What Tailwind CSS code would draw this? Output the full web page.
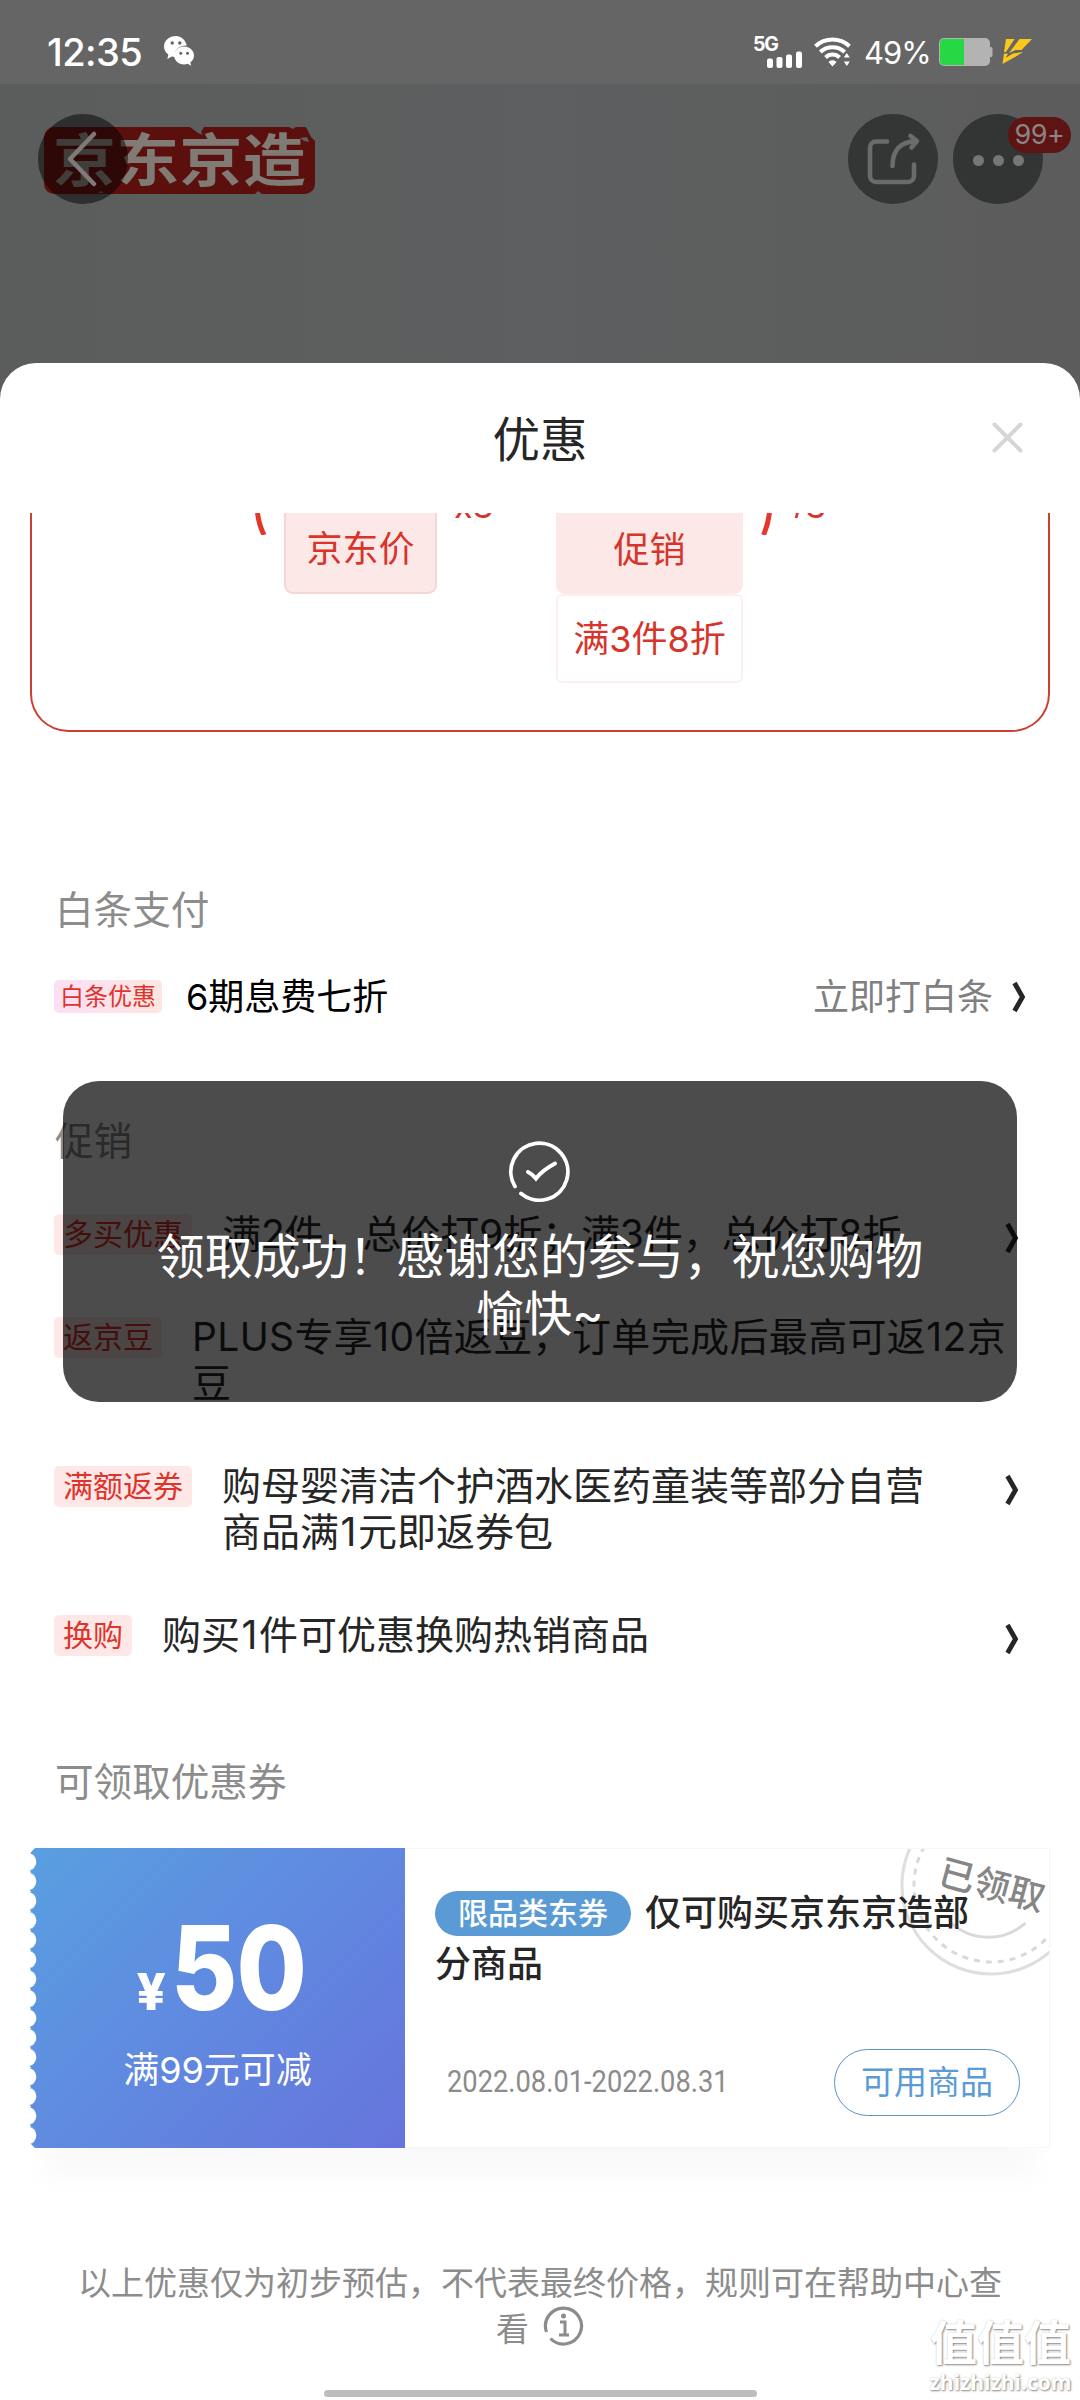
<!DOCTYPE html>
<html lang="zh-CN">
<head>
<meta charset="utf-8">
<title>优惠</title>
<script src="https://cdn.jsdelivr.net/npm/@tailwindcss/browser@4"></script>
</head>
<body class="bg-[#5c5e5e]">
<div class="relative w-[1080px] h-[2400px] overflow-hidden bg-linear-to-r from-[#5b5d5c] via-[#5e5f60] to-[#5b5c5b] font-['Inter','Noto_Sans_CJK_SC',sans-serif] flex flex-col">

  <!-- status bar -->
  <div class="h-[84px] shrink-0 bg-[#656565] flex items-center pl-[47px] pr-[47px] pt-[20px]">
    <span class="w-[97px] whitespace-nowrap text-white font-medium text-[38px] leading-none tracking-[-0.6px]">12:35</span>
    <svg class="ml-[19px] w-[32px] h-[32px] -mt-[3px]" viewBox="0 0 32 32">
      <path fill="#fff" d="M13 1C6.400 1 1 5.500 1 11.500c0 3.300 1.700 6.200 4.400 8.100L4.300 24l4.500-2.400c1 .3 2.200.5 3.400.5C10.500 16 15 10.400 23.800 10.400 22.600 5 18 1 13 1z"/>
      <path fill="#fff" d="M31 20.400c0-5-4.500-9-9.900-9s-9.900 4-9.900 9 4.400 9 9.900 9c1.200 0 2.400-.2 3.500-.6l3.600 2-.9-3.400c2.300-1.700 3.700-4.200 3.700-7z"/>
      <g fill="#656565"><circle cx="9.200" cy="8" r="1.700"/><circle cx="16.800" cy="8" r="1.700"/><circle cx="17.800" cy="18.300" r="1.500"/><circle cx="24.500" cy="18.300" r="1.500"/></g>
    </svg>
    <div class="grow"></div>
    <svg class="w-[50px] h-[34px] -mt-[3px] -ml-[3px] overflow-visible" viewBox="0 -2 50 34">
      <text x="-3" y="15" font-family="Inter" font-weight="700" font-size="19.500" letter-spacing="-1.200" fill="#fff">5G</text>
      <g fill="#fff"><rect x="11" y="22.500" width="6" height="9.500" rx="2"/><rect x="20.500" y="21" width="6" height="11" rx="2"/><rect x="30" y="18.500" width="6" height="13.500" rx="2"/><rect x="40" y="15.500" width="6" height="16.500" rx="2"/></g>
    </svg>
    <svg class="ml-[8px] w-[38px] h-[30px] -mt-[1px]" viewBox="0 0 38 30">
      <g fill="none" stroke="#fff" stroke-width="4"><path d="M1.500 9.200C11 .2 26 .2 35.500 9.200"/><path d="M6.300 15C13 8.600 24 8.600 30.700 15"/><path d="M11.500 20.500c4-3.900 10-3.900 14 0"/></g>
      <path fill="#fff" d="M14.500 25c2.300-2.200 5.700-2.200 8 0l-4 4.500zM29.800 20.500l3-4.500 3 4.500zM29.800 24.500l3 4.500 3-4.500z"/>
    </svg>
    <span class="ml-[12px] w-[70px] whitespace-nowrap text-white text-[31px] leading-none tracking-[-1px]">49%</span>
    <svg class="ml-[4px] w-[56px] h-[28px]" viewBox="0 0 56 28">
      <rect x="1" y="0" width="51" height="28" rx="5" fill="#b3b3b3"/><rect x="51" y="9" width="3.500" height="10" rx="1.500" fill="#b3b3b3"/>
      <path d="M26 1H6a4 4 0 0 0-4 4v18a4 4 0 0 0 4 4h20z" fill="#27d845"/>
    </svg>
    <svg class="ml-[7px] w-[32px] h-[27px] -mt-[2px]" viewBox="0 0 32 27"><path fill="#f8c91c" d="M5 1h8.500L5 14H3zM18.500 1H31L20.500 12h-6L8 15zM3 15.500l4 .3-2.200 4L12 15.500 22 14l-8 5L1.500 26z"/></svg>
  </div>

  <!-- product page header, dimmed -->
  <div class="h-[279px] shrink-0 flex items-start pt-[30px] pl-[38px]">
    <div class="relative w-[280px] h-[90px] flex items-center">
      <div class="ml-[6px] w-[271px] h-[67px] mt-[2px] rounded-[10px] bg-[#5b100d] flex items-center justify-center">
        <span class="text-[#807b74] font-bold text-[63px] leading-none tracking-[0.3px] whitespace-nowrap scale-y-90">京东京造</span>
      </div>
      <svg class="absolute left-0 top-0 w-[280px] h-[90px]" viewBox="0 0 280 90">
        <path fill="#5d5f5e" d="M152 13l8 6 5 2-2-3 3-5zM268 13l5 10 5 5V13zM60 79l3-2 3 2zM217 80l3-3 4 3zM262 24l7-1 2 5-5-1zM249 12l6 3 4-3z"/>
        <circle cx="45" cy="45" r="45" fill="#000" fill-opacity=".5"/>
        <path d="M56 20 32 45l24 25" fill="none" stroke="#7f7978" stroke-width="4.500" stroke-linecap="round" stroke-linejoin="round"/>
      </svg>
    </div>
    <div class="ml-[530px] size-[90px] rounded-full bg-[#343636]">
      <svg class="size-[90px]" viewBox="0 0 90 90" fill="none" stroke="#6b6b6b" stroke-width="4.600" stroke-linecap="round" stroke-linejoin="round">
        <path d="M39 27.500H28a6 6 0 0 0-6 6V62a6 6 0 0 0 6 6h32a6 6 0 0 0 6-6V50.500"/><path d="M44.500 52c0-15 7-24 23-25M62.500 22l6.500 5-5.500 6.500"/>
      </svg>
    </div>
    <div class="relative ml-[15px] size-[90px] rounded-full bg-[#333434] flex items-center justify-center gap-[9px]">
      <i class="size-[11px] rounded-full bg-[#767676] mt-[3px]"></i><i class="size-[11px] rounded-full bg-[#767676] mt-[3px]"></i><i class="size-[11px] rounded-full bg-[#767676] mt-[3px]"></i>
      <div class="absolute left-[55px] top-[3px] w-[63px] h-[36px] rounded-full bg-[#5f1414] text-[#8b8585] text-[27px] leading-[36px] text-center tracking-[-0.5px]">99+</div>
    </div>
  </div>

  <!-- promotion sheet -->
  <div class="grow bg-white rounded-t-[36px] flex flex-col">
    <div class="h-[150px] shrink-0 relative flex items-center justify-center">
      <h1 class="text-[47.500px] leading-none text-[#262626] mt-[3px]">优惠</h1>
      <svg class="absolute right-[57px] top-[59px] w-[31px] h-[31px]" viewBox="0 0 31 31"><path d="M2.500 2.500l26 26M28.500 2.500l-26 26" stroke="#d6d6d6" stroke-width="4" stroke-linecap="round"/></svg>
    </div>

    <!-- price formula card, scrolled partly under the header -->
    <div class="h-[219px] mx-[30px] shrink-0 border-2 border-t-0 border-[#cb4033] rounded-b-[38px] overflow-hidden flex items-start text-[#d5352b]">
      <div class="w-[252px] h-[22px] flex justify-end items-end overflow-hidden pr-[17px]"><svg class="w-[12px] h-[22px]" viewBox="0 0 12 22"><path d="M2.500 0Q4 12 9 22" fill="none" stroke="#e4362a" stroke-width="5"/></svg></div>
      <div class="w-[153px] h-[81px] border-2 border-t-0 border-[#f3d7d7] rounded-b-[9px] bg-[#fde8e8] flex items-center justify-center text-[36px] leading-none pb-[7px]">京东价</div>
      <div class="w-[119px] h-[5px] overflow-hidden flex items-end pl-[17px]"><span class="text-[34px] leading-[26px] -mb-[1px]">x3</span></div>
      <div class="w-[187px]">
        <div class="h-[81px] rounded-b-[9px] bg-[#fde8e8] flex items-center justify-center text-[36px] leading-none pb-[7px]">促销</div>
        <div class="h-[89px] border-2 border-[#fbf0f0] rounded-[6px] flex items-center justify-center text-[36px] leading-none whitespace-nowrap">满3件8折</div>
      </div>
      <svg class="ml-[17px] w-[14px] h-[22px]" viewBox="0 0 14 22"><path d="M9.500 0Q8 12 3.500 22" fill="none" stroke="#e4362a" stroke-width="5"/></svg>
      <div class="ml-[19px] h-[5px] overflow-hidden flex items-end"><span class="text-[34px] leading-[26px] -mb-[1px]">/3</span></div>
    </div>

    <!-- instalment payment -->
    <h2 class="mt-[148px] ml-[55px] h-[60px] text-[38.600px] leading-[60px] text-[#8c8c8c]">白条支付</h2>
    <div class="mt-[39px] h-[35px] pl-[54px] pr-[54px] flex items-center">
      <span class="w-[108px] h-[33px] rounded-[5px] bg-linear-to-r from-[#fbdff5] to-[#fde6e1] text-[#e0332b] text-[24px] leading-[33px] text-center whitespace-nowrap">白条优惠</span>
      <span class="ml-[24px] text-[36px] leading-none text-black whitespace-nowrap">6期息费七折</span>
      <span class="ml-auto text-[36px] leading-none text-[#808080] whitespace-nowrap">立即打白条</span>
      <svg class="ml-[19px] w-[14px] h-[32px]" viewBox="0 0 14 32"><path d="M2.500 2 10.500 16 2.500 30" fill="none" stroke="#262626" stroke-width="4.800"/></svg>
    </div>

    <!-- promotions -->
    <h2 class="mt-[97px] ml-[55px] h-[60px] text-[38.600px] leading-[60px] text-[#8c8c8c]">促销</h2>
    <div class="mt-[40px] pl-[54px] pr-[61px] flex flex-col gap-[57px] text-[39px] leading-[46px] text-[#262626]">
      <div class="h-[46px] flex items-start">
        <span class="mt-[3px] w-[138px] h-[41px] rounded-[5px] bg-[#fde8e7] text-[#e0332b] text-[30px] leading-[41px] text-center shrink-0">多买优惠</span>
        <p class="ml-[30px] whitespace-nowrap tracking-[-0.1px]">满2件，总价打9折；满3件，总价打8折</p>
        <svg class="ml-auto mt-[11px] w-[14px] h-[32px]" viewBox="0 0 14 32"><path d="M2.500 2 10.500 16 2.500 30" fill="none" stroke="#262626" stroke-width="4.800"/></svg>
      </div>
      <div class="h-[92px] flex items-start">
        <span class="mt-[3px] w-[108px] h-[41px] rounded-[5px] bg-[#fde8e7] text-[#e0332b] text-[30px] leading-[41px] text-center shrink-0">返京豆</span>
        <p class="ml-[30px] whitespace-nowrap tracking-[0.370px]">PLUS专享10倍返豆，订单完成后最高可返12京<br>豆</p>
      </div>
      <div class="h-[92px] flex items-start">
        <span class="mt-[3px] w-[138px] h-[41px] rounded-[5px] bg-[#fde8e7] text-[#e0332b] text-[30px] leading-[41px] text-center shrink-0">满额返券</span>
        <p class="ml-[30px] whitespace-nowrap">购母婴清洁个护酒水医药童装等部分自营<br>商品满<span class="mx-[1.500px]">1</span>元即返券包</p>
        <svg class="ml-auto mt-[11px] w-[14px] h-[32px]" viewBox="0 0 14 32"><path d="M2.500 2 10.500 16 2.500 30" fill="none" stroke="#262626" stroke-width="4.800"/></svg>
      </div>
      <div class="h-[46px] flex items-start">
        <span class="mt-[3px] w-[78px] h-[41px] rounded-[5px] bg-[#fde8e7] text-[#e0332b] text-[30px] leading-[41px] text-center shrink-0">换购</span>
        <p class="ml-[30px] whitespace-nowrap">购买<span class="mx-[1.500px]">1</span>件可优惠换购热销商品</p>
        <svg class="ml-auto mt-[11px] w-[14px] h-[32px]" viewBox="0 0 14 32"><path d="M2.500 2 10.500 16 2.500 30" fill="none" stroke="#262626" stroke-width="4.800"/></svg>
      </div>
    </div>

    <!-- coupons -->
    <h2 class="mt-[94px] ml-[55px] h-[60px] text-[38.600px] leading-[60px] text-[#8c8c8c]">可领取优惠券</h2>
    <div class="mt-[36px] mx-[30px] h-[300px] flex shadow-[0_44px_24px_-12px_rgba(0,0,0,0.025)]">
      <div class="relative w-[375px] shrink-0 h-[300px] bg-linear-135 from-[#589fe0] via-[#6089e0] to-[#6674dc] text-white flex flex-col items-center">
        <svg class="absolute left-0 top-0 w-[8px] h-[300px]" viewBox="0 0 8 300">
          <defs><pattern id="notch" x="0" y="4" width="8" height="19.550" patternUnits="userSpaceOnUse"><circle cx="-2.500" cy="9.770" r="8.900" fill="#fff"/><path d="M0 0h1v1H0z" fill="#fff"/></pattern></defs>
          <rect y="4" width="8" height="293" fill="url(#notch)"/><path d="M0 0h5L0 5zM0 300h5l-5-5z" fill="#fff"/>
        </svg>
        <div class="mt-[60px] h-[120px] w-[162px] flex items-baseline font-extrabold">
          <span class="text-[51px] leading-[120px] w-[34px] shrink-0">¥</span><span class="text-[117px] leading-[120px] tracking-[-1px] origin-left scale-x-[0.870]">50</span>
        </div>
        <span class="mt-[18px] text-[36px] leading-[48px]">满99元可减</span>
      </div>
      <div class="relative grow min-w-0 border-[1.500px] border-l-0 border-[#f6f6f6] overflow-hidden bg-white">
        <svg class="absolute right-0 top-0 w-[160px] h-[140px]" viewBox="0 0 160 140" fill="none">
          <circle cx="102" cy="36" r="89" stroke="#dedede" stroke-width="3"/>
          <circle cx="102" cy="36" r="77" stroke="#d9d9d9" stroke-width="3" stroke-dasharray="6 6"/>
          <path d="M61 73A56 56 0 0 0 136.500 74" stroke="#d9d9d9" stroke-width="3"/>
          <text x="103" y="49" text-anchor="middle" transform="rotate(15 103 36)" font-family="Noto Sans CJK SC" font-weight="500" font-size="36" fill="#868686">已领取</text>
        </svg>
        <div class="relative pt-[39px] pl-[30px] text-[36px] leading-[51px] font-medium text-[#262626] whitespace-nowrap">
          <div class="flex items-center"><span class="w-[196px] h-[45px] rounded-full bg-[#5b9bd5] text-white text-[30px] leading-[45px] text-center mr-[14px]">限品类东券</span><span>仅可购买京东京造部</span></div>
          <div>分商品</div>
        </div>
        <div class="absolute bottom-[31px] left-[42px] right-[29px] h-[67px] flex items-center justify-between">
          <span class="font-['Roboto'] font-normal text-[31px] leading-none text-[#8c8c8c] origin-left scale-x-[0.880] whitespace-nowrap -mt-[2px]">2022.08.01-2022.08.31</span>
          <span class="w-[186px] h-[67px] shrink-0 rounded-full border-[1.500px] border-[#5b92c8] text-[#5b9bd5] text-[33px] leading-[64px] text-center">可用商品</span>
        </div>
      </div>
    </div>

    <div class="mt-[112px] h-[92px] text-center text-[33px] leading-[46px] text-[#8c8c8c]">
      <p class="whitespace-nowrap">以上优惠仅为初步预估，不代表最终价格，规则可在帮助中心查</p>
      <p class="flex justify-center items-center gap-[14px]">看<svg class="w-[41px] h-[41px] -mt-[8px]" viewBox="0 0 41 41"><path d="M7.500 33.500A18 18 0 1 0 3.500 27" fill="none" stroke="#8c8c8c" stroke-width="3.200"/><path d="M17 17h5v12.500M16 30h10" fill="none" stroke="#8c8c8c" stroke-width="3"/><circle cx="20.500" cy="11" r="2.500" fill="#8c8c8c"/></svg></p>
    </div>
    <div class="mt-[38px] mx-auto w-[433px] h-[7px] rounded-full bg-[#bdbdbd]"></div>
  </div>

  <!-- toast -->
  <div class="absolute left-[63px] top-[1081px] w-[954px] h-[321px] rounded-[36px] bg-black/70 flex flex-col items-center">
    <svg class="mt-[60px] w-[62px] h-[62px] -ml-[3px]" viewBox="0 0 62 62" fill="none" stroke="#fff"><path d="M13 52.500A28.500 28.500 0 1 0 7 45.500" stroke-width="3.800" stroke-linecap="round"/><path d="M20 31q5 2.500 8 6.500Q34 29.500 47 22.500" stroke-width="4" stroke-linecap="round" stroke-linejoin="miter"/></svg>
    <p class="mt-[26px] text-white text-[47.900px] leading-[57px] text-center whitespace-nowrap">领取成功！感谢您的参与，祝您购物<br>愉快~</p>
  </div>

  <!-- site watermark -->
  <div class="absolute right-[8px] bottom-0 w-[143px] h-[84px] flex flex-col items-center text-white [text-shadow:1px_1px_2px_rgba(0,0,0,0.45),0_0_2px_rgba(0,0,0,0.15)]">
    <span class="text-[47px] leading-[54px] font-bold whitespace-nowrap">值值值</span>
    <span class="font-['Open_Sans'] font-bold text-[21px] leading-[24px] whitespace-nowrap">zhizhizhi.com</span>
  </div>
</div>
</body>
</html>
